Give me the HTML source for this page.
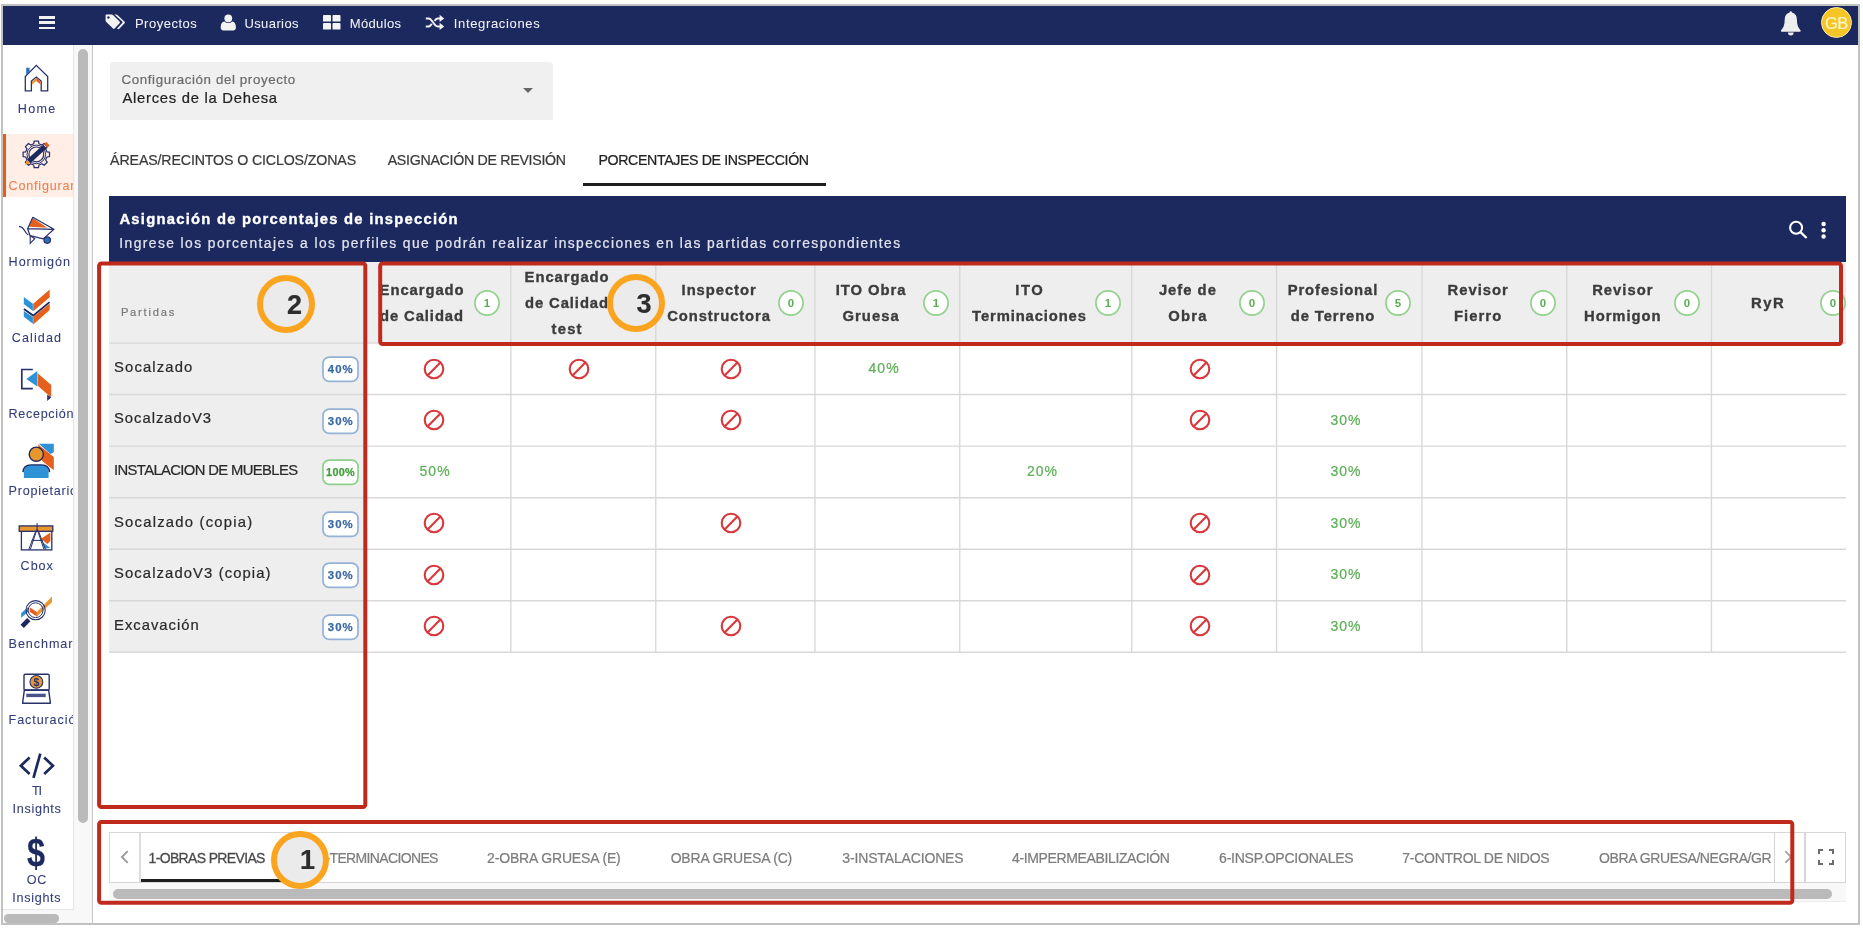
<!DOCTYPE html>
<html lang="es">
<head>
<meta charset="utf-8">
<title>Asignación de porcentajes de inspección</title>
<style>
*{box-sizing:border-box;margin:0;padding:0}
html,body{width:1863px;height:929px;background:#fff;overflow:hidden}
body{position:relative;font-family:"Liberation Sans","DejaVu Sans",sans-serif;color:#222;}
.abs{position:absolute}
.t{position:absolute;white-space:nowrap;line-height:1;-webkit-text-stroke:.22px}
#frame{position:absolute;left:1px;top:4px;width:1859px;height:921px;border:2px solid #c1c1c1;background:#fff;overflow:hidden}
/* all children of #app positioned in page coords */
#app{position:absolute;left:-3px;top:-6px;width:1863px;height:929px;will-change:transform}
#topbar{left:3px;top:6px;width:1855px;height:38.5px;background:#1c295f}
/* sidebar */
#side{left:3px;top:44.5px;width:70.3px;height:865px;background:#fff;overflow:hidden}
#sbtrack{left:73.3px;top:44.5px;width:20.2px;height:879px;background:#f8f8f8;border-left:1px solid #e6e6e6;border-right:1.6px solid #c6c6c6}
#sbthumb{left:78.1px;top:49px;width:10.2px;height:774.3px;background:#bababa;border-radius:5.1px}
/* select */
#sel{left:110.2px;top:62px;width:442.8px;height:57.8px;background:#f0f0f0;border-radius:4px 4px 0 0}
/* tabs */
/* panel */
#phead{left:109px;top:196px;width:1737px;height:67px;background:#1c295f}
/* table */
#thead{left:109px;top:262px;width:1737px;height:81px;background:#eeeeee}
#firstcol{left:109px;top:343px;width:256px;height:310px;background:#eeeeee}
.ban{position:absolute;width:22px;height:22px}
.oc{position:absolute;width:58.1px;height:58.1px;border:6px solid #fba41f;border-radius:50%;background:#ebebeb}
/* bottom tabs */
#btabs{left:109px;top:831.6px;width:1695.6px;height:51.2px;border:1px solid #d6d6d6;background:#fff}
</style>
</head>
<body>
<div id="frame"><div id="app">

<!-- TOPBAR -->
<div class="abs" id="topbar"></div>
<div class="abs" style="left:39px;top:16.2px;width:15.9px;height:2.6px;background:#f1f1f1"></div>
<div class="abs" style="left:39px;top:21.4px;width:15.9px;height:2.6px;background:#f1f1f1"></div>
<div class="abs" style="left:39px;top:26.6px;width:15.9px;height:2.6px;background:#f1f1f1"></div>
<span class="t" style="left:134.9px;top:16px;font-size:13px;line-height:15px;letter-spacing:0.51px;color:#f0f0f4;-webkit-text-stroke:.05px;">Proyectos</span>
<span class="t" style="left:244.4px;top:16px;font-size:13px;line-height:15px;letter-spacing:0.41px;color:#f0f0f4;-webkit-text-stroke:.05px;">Usuarios</span>
<span class="t" style="left:349.8px;top:16px;font-size:13px;line-height:15px;letter-spacing:0.34px;color:#f0f0f4;-webkit-text-stroke:.05px;">Módulos</span>
<span class="t" style="left:453.8px;top:16px;font-size:13px;line-height:15px;letter-spacing:0.65px;color:#f0f0f4;-webkit-text-stroke:.05px;">Integraciones</span>
<svg class="abs" style="left:105px;top:14px" width="22" height="17" viewBox="0 0 22 17"><path d="M0.6 1.6 Q0.6 0.5 1.7 0.5 L6.6 0.5 Q7.5 0.5 8.2 1.2 L14.6 7.6 Q15.4 8.4 14.6 9.2 L9.6 14.6 Q8.8 15.4 8 14.6 L1.3 8 Q0.6 7.3 0.6 6.4 Z M3.4 2.2 A1.25 1.25 0 1 0 3.41 2.2 Z" fill="#f3f3f3" fill-rule="evenodd"/><path d="M9.4 0.5 L11.2 0.5 Q12 0.5 12.7 1.2 L19.6 7.8 Q20.3 8.5 19.6 9.2 L14.3 14.8 Q13.5 15.6 12.6 14.9 L12.1 14.4 L17.2 9 Q17.9 8.3 17.2 7.6 Z" fill="#f3f3f3"/></svg>
<svg class="abs" style="left:220px;top:14px" width="17" height="17" viewBox="0 0 17 17"><circle cx="8.3" cy="4.3" r="3.9" fill="#f3f3f3"/><path d="M0.7 13.6 Q0.7 8.2 4.4 7.6 Q6 9.1 8.3 9.1 Q10.6 9.1 12.2 7.6 Q15.9 8.2 15.9 13.6 Q15.9 16.4 13.2 16.4 L3.4 16.4 Q0.7 16.4 0.7 13.6 Z" fill="#f3f3f3"/></svg>
<svg class="abs" style="left:323px;top:14.6px" width="18" height="15" viewBox="0 0 18 15"><rect x="0" y="0" width="8" height="6.6" rx="0.9" fill="#f3f3f3"/><rect x="9.5" y="0" width="8" height="6.6" rx="0.9" fill="#f3f3f3"/><rect x="0" y="8" width="8" height="6.6" rx="0.9" fill="#f3f3f3"/><rect x="9.5" y="8" width="8" height="6.6" rx="0.9" fill="#f3f3f3"/></svg>
<svg class="abs" style="left:425px;top:13.5px" width="20" height="17" viewBox="0 0 20 17"><path d="M0.8 4.4 H3.6 C7.2 4.4 8.8 12.4 12.6 12.4 H15.2 M0.8 12.4 H3.6 C5 12.4 5.9 11.3 6.8 9.9 M9.6 6.9 C10.5 5.5 11.3 4.4 12.6 4.4 H15.2" fill="none" stroke="#f3f3f3" stroke-width="2"/><path d="M14.6 0.8 L19.2 4.4 L14.6 8 Z M14.6 8.8 L19.2 12.4 L14.6 16 Z" fill="#f3f3f3"/></svg>
<svg class="abs" style="left:1779.8px;top:9.6px" width="22" height="27" viewBox="0 0 22 27"><path d="M10.8 1.2 Q12 1.2 12 2.6 Q16.9 3.8 16.9 9.8 Q16.9 17.2 20.7 20.4 Q20.9 21.8 19.6 21.8 L2 21.8 Q0.7 21.8 0.9 20.4 Q4.7 17.2 4.7 9.8 Q4.7 3.8 9.6 2.6 Q9.6 1.2 10.8 1.2 Z M7.9 22.6 L13.7 22.6 Q13.5 25.6 10.8 25.6 Q8.1 25.6 7.9 22.6 Z" fill="#eeeeee"/></svg>
<div class="abs" style="left:1820.5px;top:7px;width:31px;height:31px;border-radius:50%;background:#f4c524;border:1px solid #fbe9a8"></div>
<span class="t" style="left:1825px;top:14.5px;font-size:16.5px;color:#fff3c4;letter-spacing:-0.6px">GB</span>


<!-- SIDEBAR -->
<div class="abs" id="side">
<div class="abs" style="left:-3px;top:-44.5px;width:200px;height:929px">
<div class="abs" style="left:3px;top:134.2px;width:70.3px;height:63px;background:#feeee6"></div>
<div class="abs" style="left:3px;top:134.2px;width:2.8px;height:63px;background:#e85a1e"></div>
<svg class="abs" style="left:3px;top:44.5px" width="70" height="866" viewBox="3 44.5 70 866">
<path d="M25.3 90.4V76.1L36.3 64.9L47.7 76.1V90.4H41.2V80.6L36.3 76.6L31.4 80.6V90.4Z" fill="#fff" stroke="#27316b" stroke-width="1.3" stroke-linejoin="miter"/>
<polygon points="26.2,67.2 29.6,67.2 29.6,71.4 26.2,74.9" fill="#2e6fb5"/>
<polygon points="32,80.9 36.3,77.3 36.3,80.6 32,84.1" fill="#e8962e"/><polygon points="36.3,77.3 40.6,80.9 40.6,84.1 36.3,80.6" fill="#e4601c"/>
<path d="M33.7 143.3 L34.1 140.7 L38.5 140.7 L38.9 143.3 L41.9 144.6 L44.1 143.0 L47.2 146.1 L45.6 148.3 L46.9 151.3 L49.5 151.7 L49.5 156.1 L46.9 156.5 L45.6 159.5 L47.2 161.7 L44.1 164.8 L41.9 163.2 L38.9 164.5 L38.5 167.1 L34.1 167.1 L33.7 164.5 L30.7 163.2 L28.5 164.8 L25.4 161.7 L27.0 159.5 L25.7 156.5 L23.1 156.1 L23.1 151.7 L25.7 151.3 L27.0 148.3 L25.4 146.1 L28.5 143.0 L30.7 144.6Z" fill="none" stroke="#27316b" stroke-width="1.25" stroke-linejoin="round"/>
<circle cx="36.3" cy="153.9" r="7.4" fill="none" stroke="#27316b" stroke-width="1.2"/>
<circle cx="36.3" cy="153.9" r="9.3" fill="none" stroke="#27316b" stroke-width="1.0"/>
<polygon points="25.0,164.3 27.0,159.2 30.4,162.9" fill="#e8962e"/>
<line x1="28.7" y1="160.9" x2="45.0" y2="146.0" stroke="#1c285e" stroke-width="4.9"/>
<line x1="45.6" y1="145.4" x2="48.0" y2="143.2" stroke="#e4601c" stroke-width="4.9"/>
<polygon points="32.8,217.4 29.0,226.3 47.2,227.2" fill="#e4601c"/>
<path d="M32.8 216.8 L53.9 228.8 L43.3 238.4 L30.1 235.2 L27.6 228.2 Z M27.6 228.2 L53.9 228.8 M32.8 216.8 L27.6 228.2" fill="none" stroke="#27316b" stroke-width="1.2" stroke-linejoin="round"/>
<path d="M19 225.8 Q22.5 226.3 24.2 229.5 Q26 233 28.3 234.4" fill="none" stroke="#27316b" stroke-width="1.2"/>
<path d="M30.2 235.4 L30.2 243 L34.8 238.2 Z" fill="none" stroke="#27316b" stroke-width="1.1"/>
<circle cx="47.2" cy="239.6" r="3.2" fill="#2d6fb8" stroke="#27316b" stroke-width="1.3"/>
<polygon points="23.8,296.5 32.9,303.3 32.9,310.4 23.8,303.5" fill="#2e92d6"/>
<polygon points="23.8,310.6 32.9,316.6 32.9,323.2 23.8,316.2" fill="#2e92d6"/>
<polygon points="33.2,303.3 49.7,289.1 49.7,296.7 33.2,310.8" fill="#e4601c"/>
<polygon points="33.2,316.6 49.7,303.1 49.7,309.6 33.2,324.0" fill="#e4601c"/>
<polyline points="23.9,308.5 33.2,315.1 49.5,301.6" fill="none" stroke="#1c285e" stroke-width="1.8"/>
<polyline points="32.8,369.0 21.8,369.0 21.8,388.1 32.8,388.1" fill="none" stroke="#27316b" stroke-width="1.7"/>
<polygon points="26.3,378.5 37.3,370.6 37.3,386.1" fill="#2e92d6"/>
<polygon points="37.7,372.7 51.2,384.4 51.2,396.9 37.7,385.3" fill="#e4601c"/>
<polygon points="47.2,394.0 51.2,397.1 47.2,400.5" fill="#27316b"/>
<polygon points="38.8,443.3 53.8,443.3 53.8,451.7 50.4,453.4" fill="#2e92d6"/>
<polygon points="37.9,443.7 53.8,456.5 53.8,469.8 42.1,460.5" fill="#e4601c"/>
<path d="M23.9 477.5 V471.8 Q23.9 464.6 31 464.6 H41.5 Q48.6 464.6 48.6 471.8 V477.5 Z" fill="#2e92d6"/>
<path d="M23 471.6 Q23.4 464.4 31 464.4 H41.5 Q49.1 464.4 49.5 471.6" fill="none" stroke="#1c285e" stroke-width="1.4"/>
<circle cx="36.3" cy="453.7" r="7.1" fill="#e8962e" stroke="#1c285e" stroke-width="1.4"/>
<rect x="21.4" y="530.8" width="30.4" height="18.6" fill="#fff" stroke="#27316b" stroke-width="1.3"/>
<polygon points="50.4,532.1 41.1,538.3 47.3,543.5 50.4,540.6" fill="#e4601c"/>
<polygon points="42.1,541.2 50.4,547.4 44.5,548.1" fill="#2e92d6"/>
<rect x="19.2" y="525.4" width="33.6" height="5.4" fill="#e8962e" stroke="#27316b" stroke-width="1.3"/>
<path d="M37.1 522.5 V529 M37.1 528.5 L30.3 549 M37.1 528.5 L44 549 M35.6 531 L28.8 549 M38.6 531 L45.6 549 M31.6 539.9 H42.6" fill="none" stroke="#27316b" stroke-width="1"/>
<polygon points="21.2,612.5 28.0,606.8 28.0,611.6 21.2,617.2" fill="#2e92d6"/>
<polygon points="36.9,611.6 52.0,595.9 52.0,601.7 36.9,616.1" fill="#e8962e"/>
<polygon points="29.7,606.8 36.9,611.6 36.9,616.1 29.7,611.3" fill="#e4601c"/>
<circle cx="35.6" cy="609.7" r="9.6" fill="none" stroke="#27316b" stroke-width="1.1"/>
<circle cx="35.6" cy="609.7" r="7.4" fill="none" stroke="#27316b" stroke-width="1.0"/>
<line x1="28.8" y1="619.2" x2="22.2" y2="625.8" stroke="#1c285e" stroke-width="4.6"/>
<rect x="24" y="673.7" width="25.2" height="15.8" rx="1.2" fill="#fff" stroke="#27316b" stroke-width="1.4"/>
<polygon points="24.3,689.7 48.7,689.7 50.4,702.7 22.6,702.7" fill="#fff" stroke="#27316b" stroke-width="1.4" stroke-linejoin="round"/>
<rect x="26.3" y="693.2" width="19.4" height="3.4" fill="#4a5388"/>
<circle cx="36.4" cy="681.4" r="6.4" fill="#e8962e" stroke="#27316b" stroke-width="1.1"/>
<text x="36.4" y="685.2" font-family="Liberation Sans, sans-serif" font-size="10.5" font-weight="bold" fill="#27316b" text-anchor="middle">$</text>
<path d="M29.6 757 L20.9 765.2 L29.6 773.4 M40.3 753.1 L33.5 777.3 M44.2 757 L52.9 765.2 L44.2 773.4" fill="none" stroke="#1c285e" stroke-width="2.7"/>
</svg>
<span class="t" style="left:17.8px;top:102px;font-size:12.6px;line-height:14px;letter-spacing:1.28px;color:#323c78;-webkit-text-stroke:.08px;">Home</span>
<span class="t" style="left:8.6px;top:179px;font-size:12.6px;line-height:14px;letter-spacing:0.78px;color:#ef7d4d;-webkit-text-stroke:.08px;">Configurar</span>
<span class="t" style="left:8.6px;top:255px;font-size:12.6px;line-height:14px;letter-spacing:0.96px;color:#323c78;-webkit-text-stroke:.08px;">Hormigón</span>
<span class="t" style="left:11.7px;top:331px;font-size:12.6px;line-height:14px;letter-spacing:1.11px;color:#323c78;-webkit-text-stroke:.08px;">Calidad</span>
<span class="t" style="left:8.6px;top:407px;font-size:12.6px;line-height:14px;letter-spacing:0.67px;color:#323c78;-webkit-text-stroke:.08px;">Recepción</span>
<span class="t" style="left:8.6px;top:484px;font-size:12.6px;line-height:14px;letter-spacing:0.75px;color:#323c78;-webkit-text-stroke:.08px;">Propietario</span>
<span class="t" style="left:20.6px;top:559px;font-size:12.6px;line-height:14px;letter-spacing:0.95px;color:#323c78;-webkit-text-stroke:.08px;">Cbox</span>
<span class="t" style="left:8.6px;top:637px;font-size:12.6px;line-height:14px;letter-spacing:0.92px;color:#323c78;-webkit-text-stroke:.08px;">Benchmark</span>
<span class="t" style="left:8.6px;top:713px;font-size:12.6px;line-height:14px;letter-spacing:0.89px;color:#323c78;-webkit-text-stroke:.08px;">Facturación</span>
<span class="t" style="left:32.0px;top:784px;font-size:12.6px;line-height:14px;letter-spacing:-1.24px;color:#323c78;-webkit-text-stroke:.08px;">TI</span>
<span class="t" style="left:12.6px;top:802px;font-size:12.6px;line-height:14px;letter-spacing:0.69px;color:#323c78;-webkit-text-stroke:.08px;">Insights</span>
<span class="t" style="left:26.7px;top:873px;font-size:12.6px;line-height:14px;letter-spacing:0.66px;color:#323c78;-webkit-text-stroke:.08px;">OC</span>
<span class="t" style="left:12.2px;top:891px;font-size:12.6px;line-height:14px;letter-spacing:0.72px;color:#323c78;-webkit-text-stroke:.08px;">Insights</span>
<span class="t" style="left:27.3px;top:832.5px;font-size:41px;font-weight:bold;color:#1c285e;transform:scaleX(.79);transform-origin:0 0">$</span>
</div>
</div>
<div class="abs" id="sbtrack"></div>
<div class="abs" id="sbthumb"></div>
<div class="abs" style="left:3px;top:909.4px;width:70.5px;height:13.6px;background:#f8f8f8;border-top:1px solid #e6e6e6"></div>
<div class="abs" style="left:4.3px;top:914.4px;width:55.2px;height:8.4px;border-radius:4.2px;background:#bababa"></div>

<!-- SELECT -->
<div class="abs" id="sel"></div>
<span class="t" style="left:121.5px;top:72px;font-size:13.3px;line-height:15px;letter-spacing:0.62px;color:#6b6b6b;">Configuración del proyecto</span>
<span class="t" style="left:122.5px;top:90px;font-size:14.8px;line-height:16px;letter-spacing:0.73px;color:#1f1f1f;">Alerces de la Dehesa</span>
<div class="abs" style="left:523px;top:88px;width:0;height:0;border-left:5px solid transparent;border-right:5px solid transparent;border-top:5px solid #666"></div>

<!-- TABS -->
<span class="t" style="left:110.1px;top:152px;font-size:14.2px;line-height:16px;letter-spacing:-0.13px;color:#3a3a3a;">ÁREAS/RECINTOS O CICLOS/ZONAS</span>
<span class="t" style="left:387.7px;top:152px;font-size:14.2px;line-height:16px;letter-spacing:-0.29px;color:#3a3a3a;">ASIGNACIÓN DE REVISIÓN</span>
<span class="t" style="left:598.5px;top:152px;font-size:14.2px;line-height:16px;letter-spacing:-0.38px;color:#222;">PORCENTAJES DE INSPECCIÓN</span>
<div class="abs" style="left:582.8px;top:183px;width:243px;height:3px;background:#1f1f1f"></div>

<!-- PANEL HEAD -->
<div class="abs" id="phead"></div>
<span class="t" style="left:119.4px;top:211px;font-size:14.8px;line-height:16px;letter-spacing:1.24px;color:#ffffff;font-weight:bold;-webkit-text-stroke:.35px #fff;">Asignación de porcentajes de inspección</span>
<span class="t" style="left:119.3px;top:236px;font-size:13.8px;line-height:15px;letter-spacing:1.43px;color:#e3e5ee;">Ingrese los porcentajes a los perfiles que podrán realizar inspecciones en las partidas correspondientes</span>
<svg class="abs" style="left:1786px;top:218px" width="44" height="24" viewBox="1786 218 44 24"><circle cx="1796.1" cy="227.7" r="6" fill="none" stroke="#fff" stroke-width="2.1"/><line x1="1800.5" y1="232.1" x2="1806.6" y2="238" stroke="#fff" stroke-width="2.3"/><circle cx="1823.6" cy="224" r="2.2" fill="#fff"/><circle cx="1823.6" cy="230.25" r="2.2" fill="#fff"/><circle cx="1823.6" cy="236.5" r="2.2" fill="#fff"/></svg>


<!-- TABLE -->
<div class="abs" id="thead"></div>
<div class="abs" id="firstcol"></div>
<svg class="abs" style="left:0;top:0" width="1863" height="929" viewBox="0 0 1863 929"><line x1="510.85" y1="262" x2="510.85" y2="652.8" stroke="#d8d8d8" stroke-width="1.35"/><line x1="655.75" y1="262" x2="655.75" y2="652.8" stroke="#d8d8d8" stroke-width="1.35"/><line x1="814.95" y1="262" x2="814.95" y2="652.8" stroke="#d8d8d8" stroke-width="1.35"/><line x1="959.75" y1="262" x2="959.75" y2="652.8" stroke="#d8d8d8" stroke-width="1.35"/><line x1="1131.75" y1="262" x2="1131.75" y2="652.8" stroke="#d8d8d8" stroke-width="1.35"/><line x1="1276.55" y1="262" x2="1276.55" y2="652.8" stroke="#d8d8d8" stroke-width="1.35"/><line x1="1421.95" y1="262" x2="1421.95" y2="652.8" stroke="#d8d8d8" stroke-width="1.35"/><line x1="1566.75" y1="262" x2="1566.75" y2="652.8" stroke="#d8d8d8" stroke-width="1.35"/><line x1="1711.45" y1="262" x2="1711.45" y2="652.8" stroke="#d8d8d8" stroke-width="1.35"/><line x1="109" y1="343.05" x2="1846" y2="343.05" stroke="#d8d8d8" stroke-width="1.35"/><line x1="109" y1="394.50" x2="1846" y2="394.50" stroke="#d8d8d8" stroke-width="1.35"/><line x1="109" y1="446.10" x2="1846" y2="446.10" stroke="#d8d8d8" stroke-width="1.35"/><line x1="109" y1="497.70" x2="1846" y2="497.70" stroke="#d8d8d8" stroke-width="1.35"/><line x1="109" y1="549.20" x2="1846" y2="549.20" stroke="#d8d8d8" stroke-width="1.35"/><line x1="109" y1="600.70" x2="1846" y2="600.70" stroke="#d8d8d8" stroke-width="1.35"/><line x1="109" y1="652.20" x2="1846" y2="652.20" stroke="#d8d8d8" stroke-width="1.35"/></svg>
<span class="t" style="left:120.9px;top:306px;font-size:11.2px;line-height:12px;letter-spacing:1.76px;color:#7a7a7a;">Partidas</span>
<span class="t" style="left:379.6px;top:282px;font-size:14.8px;line-height:16px;letter-spacing:0.94px;color:#3c3c3c;font-weight:bold;-webkit-text-stroke:.35px #3c3c3c;">Encargado</span>
<span class="t" style="left:380.0px;top:308px;font-size:14.8px;line-height:16px;letter-spacing:0.91px;color:#3c3c3c;font-weight:bold;-webkit-text-stroke:.35px #3c3c3c;">de Calidad</span>
<svg class="abs" style="left:472.7px;top:289.2px" width="28" height="28" viewBox="0 0 28 28"><circle cx="14" cy="14" r="12.1" fill="#fff" stroke="#93d08d" stroke-width="1.7"/><text x="14" y="18" text-anchor="middle" font-family="Liberation Sans, sans-serif" font-size="11.5" font-weight="bold" fill="#58b050">1</text></svg>
<span class="t" style="left:524.6px;top:269px;font-size:14.8px;line-height:16px;letter-spacing:0.94px;color:#3c3c3c;font-weight:bold;-webkit-text-stroke:.35px #3c3c3c;">Encargado</span>
<span class="t" style="left:525.0px;top:295px;font-size:14.8px;line-height:16px;letter-spacing:0.91px;color:#3c3c3c;font-weight:bold;-webkit-text-stroke:.35px #3c3c3c;">de Calidad</span>
<span class="t" style="left:551.5px;top:321px;font-size:14.8px;line-height:16px;letter-spacing:1.24px;color:#3c3c3c;font-weight:bold;-webkit-text-stroke:.35px #3c3c3c;">test</span>
<span class="t" style="left:681.6px;top:282px;font-size:14.8px;line-height:16px;letter-spacing:0.94px;color:#3c3c3c;font-weight:bold;-webkit-text-stroke:.35px #3c3c3c;">Inspector</span>
<span class="t" style="left:667.3px;top:308px;font-size:14.8px;line-height:16px;letter-spacing:0.88px;color:#3c3c3c;font-weight:bold;-webkit-text-stroke:.35px #3c3c3c;">Constructora</span>
<svg class="abs" style="left:776.8px;top:289.2px" width="28" height="28" viewBox="0 0 28 28"><circle cx="14" cy="14" r="12.1" fill="#fff" stroke="#93d08d" stroke-width="1.7"/><text x="14" y="18" text-anchor="middle" font-family="Liberation Sans, sans-serif" font-size="11.5" font-weight="bold" fill="#58b050">0</text></svg>
<span class="t" style="left:835.7px;top:282px;font-size:14.8px;line-height:16px;letter-spacing:0.96px;color:#3c3c3c;font-weight:bold;-webkit-text-stroke:.35px #3c3c3c;">ITO Obra</span>
<span class="t" style="left:842.5px;top:308px;font-size:14.8px;line-height:16px;letter-spacing:1.05px;color:#3c3c3c;font-weight:bold;-webkit-text-stroke:.35px #3c3c3c;">Gruesa</span>
<svg class="abs" style="left:921.6px;top:289.2px" width="28" height="28" viewBox="0 0 28 28"><circle cx="14" cy="14" r="12.1" fill="#fff" stroke="#93d08d" stroke-width="1.7"/><text x="14" y="18" text-anchor="middle" font-family="Liberation Sans, sans-serif" font-size="11.5" font-weight="bold" fill="#58b050">1</text></svg>
<span class="t" style="left:1015.3px;top:282px;font-size:14.8px;line-height:16px;letter-spacing:1.49px;color:#3c3c3c;font-weight:bold;-webkit-text-stroke:.35px #3c3c3c;">ITO</span>
<span class="t" style="left:972.1px;top:308px;font-size:14.8px;line-height:16px;letter-spacing:0.87px;color:#3c3c3c;font-weight:bold;-webkit-text-stroke:.35px #3c3c3c;">Terminaciones</span>
<svg class="abs" style="left:1093.6px;top:289.2px" width="28" height="28" viewBox="0 0 28 28"><circle cx="14" cy="14" r="12.1" fill="#fff" stroke="#93d08d" stroke-width="1.7"/><text x="14" y="18" text-anchor="middle" font-family="Liberation Sans, sans-serif" font-size="11.5" font-weight="bold" fill="#58b050">1</text></svg>
<span class="t" style="left:1158.9px;top:282px;font-size:14.8px;line-height:16px;letter-spacing:1.00px;color:#3c3c3c;font-weight:bold;-webkit-text-stroke:.35px #3c3c3c;">Jefe de</span>
<span class="t" style="left:1168.3px;top:308px;font-size:14.8px;line-height:16px;letter-spacing:1.24px;color:#3c3c3c;font-weight:bold;-webkit-text-stroke:.35px #3c3c3c;">Obra</span>
<svg class="abs" style="left:1238.4px;top:289.2px" width="28" height="28" viewBox="0 0 28 28"><circle cx="14" cy="14" r="12.1" fill="#fff" stroke="#93d08d" stroke-width="1.7"/><text x="14" y="18" text-anchor="middle" font-family="Liberation Sans, sans-serif" font-size="11.5" font-weight="bold" fill="#58b050">0</text></svg>
<span class="t" style="left:1287.7px;top:282px;font-size:14.8px;line-height:16px;letter-spacing:0.90px;color:#3c3c3c;font-weight:bold;-webkit-text-stroke:.35px #3c3c3c;">Profesional</span>
<span class="t" style="left:1290.7px;top:308px;font-size:14.8px;line-height:16px;letter-spacing:0.91px;color:#3c3c3c;font-weight:bold;-webkit-text-stroke:.35px #3c3c3c;">de Terreno</span>
<svg class="abs" style="left:1383.8px;top:289.2px" width="28" height="28" viewBox="0 0 28 28"><circle cx="14" cy="14" r="12.1" fill="#fff" stroke="#93d08d" stroke-width="1.7"/><text x="14" y="18" text-anchor="middle" font-family="Liberation Sans, sans-serif" font-size="11.5" font-weight="bold" fill="#58b050">5</text></svg>
<span class="t" style="left:1447.5px;top:282px;font-size:14.8px;line-height:16px;letter-spacing:1.00px;color:#3c3c3c;font-weight:bold;-webkit-text-stroke:.35px #3c3c3c;">Revisor</span>
<span class="t" style="left:1454.0px;top:308px;font-size:14.8px;line-height:16px;letter-spacing:1.05px;color:#3c3c3c;font-weight:bold;-webkit-text-stroke:.35px #3c3c3c;">Fierro</span>
<svg class="abs" style="left:1528.6px;top:289.2px" width="28" height="28" viewBox="0 0 28 28"><circle cx="14" cy="14" r="12.1" fill="#fff" stroke="#93d08d" stroke-width="1.7"/><text x="14" y="18" text-anchor="middle" font-family="Liberation Sans, sans-serif" font-size="11.5" font-weight="bold" fill="#58b050">0</text></svg>
<span class="t" style="left:1592.2px;top:282px;font-size:14.8px;line-height:16px;letter-spacing:1.00px;color:#3c3c3c;font-weight:bold;-webkit-text-stroke:.35px #3c3c3c;">Revisor</span>
<span class="t" style="left:1584.0px;top:308px;font-size:14.8px;line-height:16px;letter-spacing:0.96px;color:#3c3c3c;font-weight:bold;-webkit-text-stroke:.35px #3c3c3c;">Hormigon</span>
<svg class="abs" style="left:1673.3px;top:289.2px" width="28" height="28" viewBox="0 0 28 28"><circle cx="14" cy="14" r="12.1" fill="#fff" stroke="#93d08d" stroke-width="1.7"/><text x="14" y="18" text-anchor="middle" font-family="Liberation Sans, sans-serif" font-size="11.5" font-weight="bold" fill="#58b050">0</text></svg>
<span class="t" style="left:1751.1px;top:295px;font-size:14.8px;line-height:16px;letter-spacing:1.49px;color:#3c3c3c;font-weight:bold;-webkit-text-stroke:.35px #3c3c3c;">RyR</span>
<svg class="abs" style="left:1818.6px;top:289.2px" width="28" height="28" viewBox="0 0 28 28"><circle cx="14" cy="14" r="12.1" fill="#fff" stroke="#93d08d" stroke-width="1.7"/><text x="14" y="18" text-anchor="middle" font-family="Liberation Sans, sans-serif" font-size="11.5" font-weight="bold" fill="#58b050">0</text></svg>
<span class="t" style="left:114.0px;top:359px;font-size:14.8px;line-height:16px;letter-spacing:1.15px;color:#2a2a2a;">Socalzado</span>
<svg class="abs" style="left:321px;top:355.0px" width="40" height="29" viewBox="0 0 40 29"><rect x="1.95" y="2.05" width="35.1" height="24.4" rx="6.5" fill="#fff" stroke="#94b2d6" stroke-width="1.7"/></svg>
<span class="t" style="left:327.7px;top:363px;font-size:11.4px;line-height:12px;letter-spacing:1.11px;color:#3a6aa6;font-weight:bold;-webkit-text-stroke:.25px #3a6aa6;">40%</span>
<svg class="ban" style="left:423.1px;top:357.7px" viewBox="0 0 22 22"><circle cx="11" cy="11" r="9.3" fill="none" stroke="#d8373c" stroke-width="2.1"/><line x1="17.4" y1="4.6" x2="4.6" y2="17.4" stroke="#d8373c" stroke-width="2.1"/></svg>
<svg class="ban" style="left:568.0px;top:357.7px" viewBox="0 0 22 22"><circle cx="11" cy="11" r="9.3" fill="none" stroke="#d8373c" stroke-width="2.1"/><line x1="17.4" y1="4.6" x2="4.6" y2="17.4" stroke="#d8373c" stroke-width="2.1"/></svg>
<svg class="ban" style="left:720.1px;top:357.7px" viewBox="0 0 22 22"><circle cx="11" cy="11" r="9.3" fill="none" stroke="#d8373c" stroke-width="2.1"/><line x1="17.4" y1="4.6" x2="4.6" y2="17.4" stroke="#d8373c" stroke-width="2.1"/></svg>
<span class="t" style="left:868.5px;top:360px;font-size:14px;line-height:16px;letter-spacing:1.05px;color:#5cb054;">40%</span>
<svg class="ban" style="left:1188.9px;top:357.7px" viewBox="0 0 22 22"><circle cx="11" cy="11" r="9.3" fill="none" stroke="#d8373c" stroke-width="2.1"/><line x1="17.4" y1="4.6" x2="4.6" y2="17.4" stroke="#d8373c" stroke-width="2.1"/></svg>
<span class="t" style="left:114.0px;top:410px;font-size:14.8px;line-height:16px;letter-spacing:0.98px;color:#2a2a2a;">SocalzadoV3</span>
<svg class="abs" style="left:321px;top:406.6px" width="40" height="29" viewBox="0 0 40 29"><rect x="1.95" y="2.05" width="35.1" height="24.4" rx="6.5" fill="#fff" stroke="#94b2d6" stroke-width="1.7"/></svg>
<span class="t" style="left:327.7px;top:415px;font-size:11.4px;line-height:12px;letter-spacing:1.11px;color:#3a6aa6;font-weight:bold;-webkit-text-stroke:.25px #3a6aa6;">30%</span>
<svg class="ban" style="left:423.1px;top:409.3px" viewBox="0 0 22 22"><circle cx="11" cy="11" r="9.3" fill="none" stroke="#d8373c" stroke-width="2.1"/><line x1="17.4" y1="4.6" x2="4.6" y2="17.4" stroke="#d8373c" stroke-width="2.1"/></svg>
<svg class="ban" style="left:720.1px;top:409.3px" viewBox="0 0 22 22"><circle cx="11" cy="11" r="9.3" fill="none" stroke="#d8373c" stroke-width="2.1"/><line x1="17.4" y1="4.6" x2="4.6" y2="17.4" stroke="#d8373c" stroke-width="2.1"/></svg>
<svg class="ban" style="left:1188.9px;top:409.3px" viewBox="0 0 22 22"><circle cx="11" cy="11" r="9.3" fill="none" stroke="#d8373c" stroke-width="2.1"/><line x1="17.4" y1="4.6" x2="4.6" y2="17.4" stroke="#d8373c" stroke-width="2.1"/></svg>
<span class="t" style="left:1330.4px;top:412px;font-size:14px;line-height:16px;letter-spacing:1.05px;color:#5cb054;">30%</span>
<span class="t" style="left:114.0px;top:462px;font-size:14.8px;line-height:16px;letter-spacing:-0.62px;color:#2a2a2a;">INSTALACION DE MUEBLES</span>
<svg class="abs" style="left:321px;top:458.2px" width="40" height="29" viewBox="0 0 40 29"><rect x="1.95" y="2.05" width="35.1" height="24.4" rx="6.5" fill="#fff" stroke="#8fd08a" stroke-width="1.7"/></svg>
<span class="t" style="left:326.1px;top:466px;font-size:10.9px;line-height:12px;letter-spacing:0.27px;color:#3f9f3a;font-weight:bold;-webkit-text-stroke:.25px #3f9f3a;">100%</span>
<span class="t" style="left:419.5px;top:463px;font-size:14px;line-height:16px;letter-spacing:1.05px;color:#5cb054;">50%</span>
<span class="t" style="left:1026.9px;top:463px;font-size:14px;line-height:16px;letter-spacing:1.05px;color:#5cb054;">20%</span>
<span class="t" style="left:1330.4px;top:463px;font-size:14px;line-height:16px;letter-spacing:1.05px;color:#5cb054;">30%</span>
<span class="t" style="left:114.0px;top:514px;font-size:14.8px;line-height:16px;letter-spacing:1.23px;color:#2a2a2a;">Socalzado (copia)</span>
<svg class="abs" style="left:321px;top:509.8px" width="40" height="29" viewBox="0 0 40 29"><rect x="1.95" y="2.05" width="35.1" height="24.4" rx="6.5" fill="#fff" stroke="#94b2d6" stroke-width="1.7"/></svg>
<span class="t" style="left:327.7px;top:518px;font-size:11.4px;line-height:12px;letter-spacing:1.11px;color:#3a6aa6;font-weight:bold;-webkit-text-stroke:.25px #3a6aa6;">30%</span>
<svg class="ban" style="left:423.1px;top:512.4px" viewBox="0 0 22 22"><circle cx="11" cy="11" r="9.3" fill="none" stroke="#d8373c" stroke-width="2.1"/><line x1="17.4" y1="4.6" x2="4.6" y2="17.4" stroke="#d8373c" stroke-width="2.1"/></svg>
<svg class="ban" style="left:720.1px;top:512.4px" viewBox="0 0 22 22"><circle cx="11" cy="11" r="9.3" fill="none" stroke="#d8373c" stroke-width="2.1"/><line x1="17.4" y1="4.6" x2="4.6" y2="17.4" stroke="#d8373c" stroke-width="2.1"/></svg>
<svg class="ban" style="left:1188.9px;top:512.4px" viewBox="0 0 22 22"><circle cx="11" cy="11" r="9.3" fill="none" stroke="#d8373c" stroke-width="2.1"/><line x1="17.4" y1="4.6" x2="4.6" y2="17.4" stroke="#d8373c" stroke-width="2.1"/></svg>
<span class="t" style="left:1330.4px;top:515px;font-size:14px;line-height:16px;letter-spacing:1.05px;color:#5cb054;">30%</span>
<span class="t" style="left:114.0px;top:565px;font-size:14.8px;line-height:16px;letter-spacing:1.11px;color:#2a2a2a;">SocalzadoV3 (copia)</span>
<svg class="abs" style="left:321px;top:561.3px" width="40" height="29" viewBox="0 0 40 29"><rect x="1.95" y="2.05" width="35.1" height="24.4" rx="6.5" fill="#fff" stroke="#94b2d6" stroke-width="1.7"/></svg>
<span class="t" style="left:327.7px;top:569px;font-size:11.4px;line-height:12px;letter-spacing:1.11px;color:#3a6aa6;font-weight:bold;-webkit-text-stroke:.25px #3a6aa6;">30%</span>
<svg class="ban" style="left:423.1px;top:563.9px" viewBox="0 0 22 22"><circle cx="11" cy="11" r="9.3" fill="none" stroke="#d8373c" stroke-width="2.1"/><line x1="17.4" y1="4.6" x2="4.6" y2="17.4" stroke="#d8373c" stroke-width="2.1"/></svg>
<svg class="ban" style="left:1188.9px;top:563.9px" viewBox="0 0 22 22"><circle cx="11" cy="11" r="9.3" fill="none" stroke="#d8373c" stroke-width="2.1"/><line x1="17.4" y1="4.6" x2="4.6" y2="17.4" stroke="#d8373c" stroke-width="2.1"/></svg>
<span class="t" style="left:1330.4px;top:566px;font-size:14px;line-height:16px;letter-spacing:1.05px;color:#5cb054;">30%</span>
<span class="t" style="left:114.0px;top:617px;font-size:14.8px;line-height:16px;letter-spacing:1.01px;color:#2a2a2a;">Excavación</span>
<svg class="abs" style="left:321px;top:612.8px" width="40" height="29" viewBox="0 0 40 29"><rect x="1.95" y="2.05" width="35.1" height="24.4" rx="6.5" fill="#fff" stroke="#94b2d6" stroke-width="1.7"/></svg>
<span class="t" style="left:327.7px;top:621px;font-size:11.4px;line-height:12px;letter-spacing:1.11px;color:#3a6aa6;font-weight:bold;-webkit-text-stroke:.25px #3a6aa6;">30%</span>
<svg class="ban" style="left:423.1px;top:615.4px" viewBox="0 0 22 22"><circle cx="11" cy="11" r="9.3" fill="none" stroke="#d8373c" stroke-width="2.1"/><line x1="17.4" y1="4.6" x2="4.6" y2="17.4" stroke="#d8373c" stroke-width="2.1"/></svg>
<svg class="ban" style="left:720.1px;top:615.4px" viewBox="0 0 22 22"><circle cx="11" cy="11" r="9.3" fill="none" stroke="#d8373c" stroke-width="2.1"/><line x1="17.4" y1="4.6" x2="4.6" y2="17.4" stroke="#d8373c" stroke-width="2.1"/></svg>
<svg class="ban" style="left:1188.9px;top:615.4px" viewBox="0 0 22 22"><circle cx="11" cy="11" r="9.3" fill="none" stroke="#d8373c" stroke-width="2.1"/><line x1="17.4" y1="4.6" x2="4.6" y2="17.4" stroke="#d8373c" stroke-width="2.1"/></svg>
<span class="t" style="left:1330.4px;top:618px;font-size:14px;line-height:16px;letter-spacing:1.05px;color:#5cb054;">30%</span>
<div class="abs" style="left:1846px;top:190px;width:12px;height:480px;background:#fff"></div>

<!-- BOTTOM TABS -->
<div class="abs" id="btabs"></div>
<div class="abs" style="left:139px;top:833px;width:2px;height:49px;background:#dddddd"></div>
<div class="abs" style="left:1774px;top:833px;width:1px;height:49px;background:#d4d4d4"></div>
<div class="abs" style="left:141px;top:879.3px;width:149px;height:3.2px;background:#1e1e1e"></div>
<span class="t" style="left:148.5px;top:850px;font-size:14px;line-height:16px;letter-spacing:-0.65px;color:#4a4a4a;-webkit-text-stroke:.3px #4a4a4a;">1-OBRAS PREVIAS</span>
<span class="t" style="left:318.3px;top:850px;font-size:14px;line-height:16px;letter-spacing:-0.64px;color:#7d7d7d;">5-TERMINACIONES</span>
<span class="t" style="left:487.0px;top:850px;font-size:14px;line-height:16px;letter-spacing:-0.15px;color:#7d7d7d;">2-OBRA GRUESA (E)</span>
<span class="t" style="left:670.7px;top:850px;font-size:14px;line-height:16px;letter-spacing:-0.21px;color:#7d7d7d;">OBRA GRUESA (C)</span>
<span class="t" style="left:842.3px;top:850px;font-size:14px;line-height:16px;letter-spacing:-0.15px;color:#7d7d7d;">3-INSTALACIONES</span>
<span class="t" style="left:1012.1px;top:850px;font-size:14px;line-height:16px;letter-spacing:-0.37px;color:#7d7d7d;">4-IMPERMEABILIZACIÓN</span>
<span class="t" style="left:1219.1px;top:850px;font-size:14px;line-height:16px;letter-spacing:-0.23px;color:#7d7d7d;">6-INSP.OPCIONALES</span>
<span class="t" style="left:1402.3px;top:850px;font-size:14px;line-height:16px;letter-spacing:-0.27px;color:#7d7d7d;">7-CONTROL DE NIDOS</span>
<span class="t" style="left:1599.1px;top:850px;font-size:14px;line-height:16px;letter-spacing:-0.42px;color:#7d7d7d;">OBRA GRUESA/NEGRA/GR</span>
<svg class="abs" style="left:119px;top:850px" width="12" height="14" viewBox="0 0 12 14"><path d="M8.7 1.2 L2.9 7 L8.7 12.8" fill="none" stroke="#9a9a9a" stroke-width="1.9"/></svg>
<svg class="abs" style="left:1782px;top:850px" width="12" height="14" viewBox="0 0 12 14"><path d="M3.3 1.2 L9.1 7 L3.3 12.8" fill="none" stroke="#a6a6a6" stroke-width="1.9"/></svg>
<div class="abs" style="left:1805.4px;top:831.6px;width:40.6px;height:51.2px;border:1px solid #d6d6d6;background:#fff"></div>
<svg class="abs" style="left:1818px;top:849px" width="16" height="16" viewBox="0 0 16 16"><path d="M1 5V1H5M11 1H15V5M15 11V15H11M5 15H1V11" fill="none" stroke="#6c6c6c" stroke-width="2"/></svg>
<div class="abs" style="left:109px;top:883.3px;width:1737px;height:18.5px;background:#f8f8f8;border-bottom:1.5px solid #ececec"></div>
<div class="abs" style="left:113.3px;top:889px;width:1718.5px;height:9.5px;border-radius:5px;background:#bababa"></div>

<!-- ANNOTATIONS -->
<svg class="abs" style="left:0;top:0" width="1863" height="929" viewBox="0 0 1863 929">
<rect x="99.10" y="263.40" width="266.20" height="543.50" rx="2.3" fill="none" stroke="#bf2a1c" stroke-width="4.0"/>
<rect x="380.20" y="263.40" width="1460.80" height="80.50" rx="2.3" fill="none" stroke="#bf2a1c" stroke-width="4.0"/>
<rect x="99.10" y="822.00" width="1693.20" height="80.70" rx="2.3" fill="none" stroke="#bf2a1c" stroke-width="4.0"/>
</svg>
<div class="oc" style="left:257.3px;top:275.4px"></div><span class="t" style="left:287.1px;top:290px;font-size:27px;line-height:30px;font-weight:bold;color:#2d2d2d">2</span>
<div class="oc" style="left:607.0px;top:274.3px"></div><span class="t" style="left:636.4px;top:289px;font-size:27px;line-height:30px;font-weight:bold;color:#2d2d2d">3</span>
<div class="oc" style="left:270.8px;top:830.6px"></div><span class="t" style="left:299.9px;top:845px;font-size:27px;line-height:30px;font-weight:bold;color:#2d2d2d">1</span>

</div></div>
</body>
</html>
